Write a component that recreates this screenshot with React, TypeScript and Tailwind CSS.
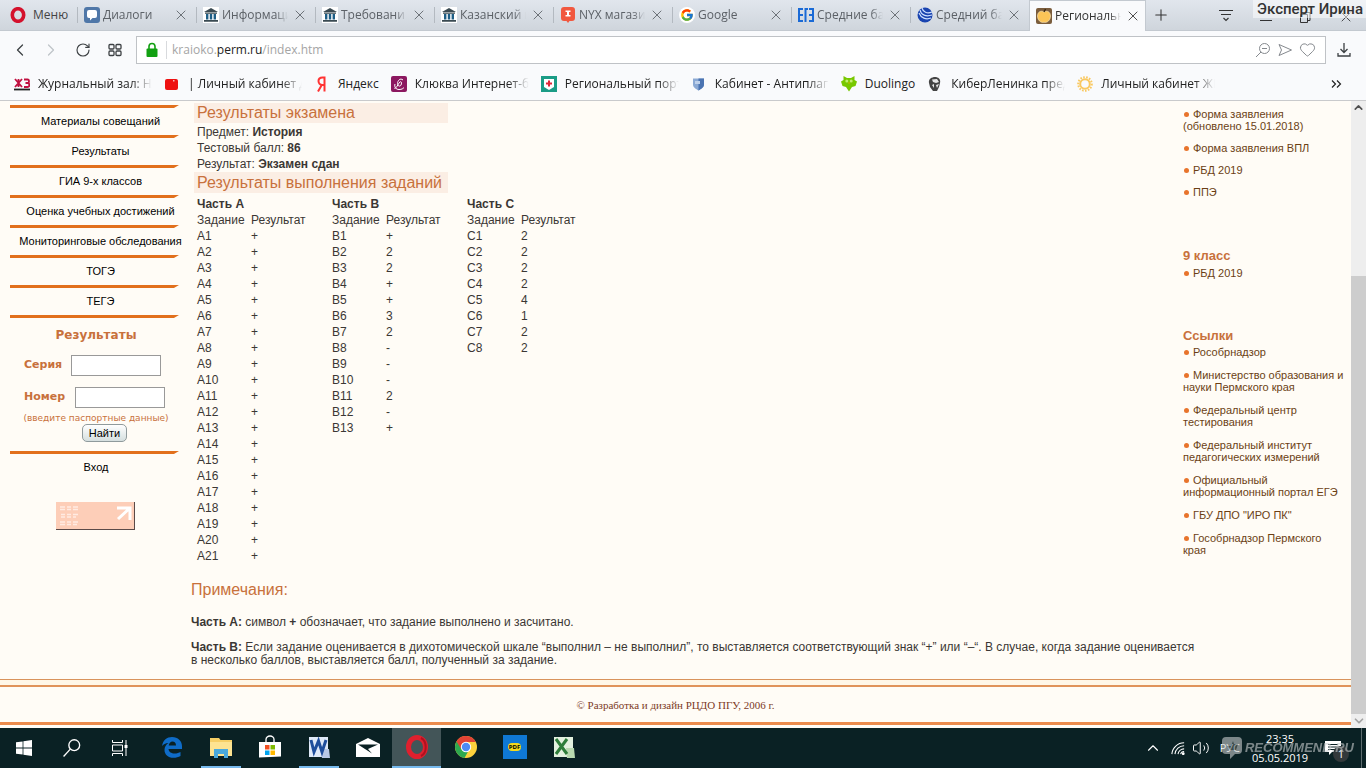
import type { ReactNode } from 'react';
import { ChevronLeft, ChevronRight, ChevronUp, ChevronDown, Heart, Plus, RotateCw, Volume2, X } from 'lucide-react';
import { FcGoogle } from 'react-icons/fc';

const FADE = '[mask-image:linear-gradient(to_right,#000_82%,transparent)]';

function MuseumIcon() {
  return (
    <svg viewBox="0 0 16 16" className="size-4 shrink-0">
      <rect width="16" height="16" fill="#fff" />
      <path d="M8 1 15 5H1z" fill="#3a4a52" />
      <path d="M2 5.500h12v1.200H2zM1 13h14v1.800H1z" fill="#3a4a52" />
      <path d="M3 7h2.400v5.500H3zM6.800 7h2.400v5.500H6.800zM10.600 7H13v5.500h-2.400z" fill="#1e5e86" />
    </svg>
  );
}

function DialogIcon() {
  return (
    <svg viewBox="0 0 16 16" className="size-4 shrink-0">
      <rect width="16" height="16" rx="3" fill="#4f77a8" />
      <path d="M5 3h6a2 2 0 0 1 2 2v4a2 2 0 0 1-2 2H8.500L6 13.500V11H5a2 2 0 0 1-2-2V5a2 2 0 0 1 2-2z" fill="#fff" />
    </svg>
  );
}

function NyxIcon() {
  return (
    <svg viewBox="0 0 16 16" className="size-4 shrink-0">
      <path d="M4 0h8a3 3 0 0 1 3 3v8a3 3 0 0 1-3 3h-2.500L8 16l-1.500-2H4a3 3 0 0 1-3-3V3a3 3 0 0 1 3-3z" fill="#f1583f" />
      <path d="M5.500 3.500h5v1.500H9v3h1.500v1.500h-5V8H7V5H5.500z" fill="#fff" />
    </svg>
  );
}

function GoogleIcon() {
  return (
    <span className="flex size-4 shrink-0 items-center justify-center rounded-full bg-white">
      <FcGoogle size={14} />
    </span>
  );
}

function EgeIcon() {
  return (
    <svg viewBox="0 0 16 16" className="size-4 shrink-0" fill="none" stroke="#1a6ad6" strokeWidth="2">
      <path d="M5 2H1v12h4M1 8h4M7.500 15V2H10M11 2h4v12h-4M11 8h4" />
    </svg>
  );
}

function GlobeIcon() {
  return (
    <svg viewBox="0 0 16 16" className="size-4 shrink-0">
      <circle cx="8" cy="8" r="7.500" fill="#1a44b0" />
      <path d="M5 1c1 4 5 6 10 4M3 3c1 5 6 7 12 5M2 6c2 5 7 7 12 5" fill="none" stroke="#cfe0ff" strokeWidth="1.200" />
    </svg>
  );
}

function AppleIcon() {
  return (
    <svg viewBox="0 0 16 16" className="size-4 shrink-0">
      <rect width="16" height="16" rx="2" fill="#7a5c3c" />
      <path d="M8 4C5 2 1.500 4 1.500 8S4.500 15 8 14.300c3.500.7 6.500-2.300 6.500-6.300S11 2 8 4z" fill="#fbc457" stroke="#fff0c8" strokeWidth=".6" />
      <path d="M8 4 9.500 1" stroke="#33240f" strokeWidth="1.200" />
    </svg>
  );
}

type Tab = { title: string; icon: ReactNode; active?: boolean };

const tabs: Tab[] = [
  { title: 'Диалоги', icon: <DialogIcon /> },
  { title: 'Информаци', icon: <MuseumIcon /> },
  { title: 'Требовани', icon: <MuseumIcon /> },
  { title: 'Казанский в', icon: <MuseumIcon /> },
  { title: 'NYX магази', icon: <NyxIcon /> },
  { title: 'Google', icon: <GoogleIcon /> },
  { title: 'Средние ба', icon: <EgeIcon /> },
  { title: 'Средний ба', icon: <GlobeIcon /> },
  { title: 'Региональн', icon: <AppleIcon />, active: true },
];

const bookmarks: { title: string; long?: boolean; icon: ReactNode }[] = [
  {
    title: 'Журнальный зал: НЛ',
    long: true,
    icon: (
      <svg viewBox="0 0 16 16" className="size-4 shrink-0" stroke="#c01040" strokeWidth="1.800" fill="none">
        <path d="M1 3l7 8M8 3l-7 8M4.500 3v8M10 3.500h3.500c2 0 2 3.500 0 3.500H11.500h2c2.500 0 2.500 4 0 4H10" />
        <path d="M0 13.500h16" stroke="#222" />
      </svg>
    ),
  },
  {
    title: '| Личный кабинет До',
    long: true,
    icon: (
      <svg viewBox="0 0 16 16" className="size-4 shrink-0">
        <rect x="1" y="3" width="13" height="11" rx="2" fill="#ee1111" />
        <path d="M9 4h1.500v1.500H9z" fill="#fff" opacity=".7" />
      </svg>
    ),
  },
  {
    title: 'Яндекс',
    icon: (
      <svg viewBox="0 0 16 16" className="size-4 shrink-0" fill="none" stroke="#f33" strokeWidth="2">
        <path d="M10.500 15.500V1.500H8.500C5.500 1.500 4.500 3 4.500 5s1.500 4 4 4h2M7.500 9.500 4 15.500" />
      </svg>
    ),
  },
  {
    title: 'Клюква Интернет-ба',
    long: true,
    icon: (
      <svg viewBox="0 0 16 16" className="size-4 shrink-0" fill="none" stroke="#fff">
        <rect width="16" height="16" rx="2" fill="#8c1860" stroke="none" />
        <path d="M12 4C9 1.500 6.500 5 6.500 7.500S9 11 10 9s.5-4-1-3-2 4-5.500 7M4 8c-1 3 1 5.500 4 5.500s4-1 5-2" />
      </svg>
    ),
  },
  {
    title: 'Региональный порта',
    long: true,
    icon: (
      <svg viewBox="0 0 16 16" className="size-4 shrink-0">
        <rect width="16" height="16" fill="#1b9c86" />
        <path d="M3 3h10v8l-5 3-5-3z" fill="#fff" />
        <path d="M7 4.500h2v2h2v2H9v2H7v-2H5v-2h2z" fill="#e02638" />
      </svg>
    ),
  },
  {
    title: 'Кабинет - Антиплаги',
    long: true,
    icon: (
      <svg viewBox="0 0 16 16" className="size-4 shrink-0">
        <path d="M2 2.500h11v6c0 3-3 4.500-5.500 6C5 13 2 11.500 2 8.500z" fill="#8ba9d4" />
        <path d="M7.500 2.500H13v6c0 3-3 4.500-5.500 6z" fill="#4b74b2" />
        <path d="M4 5h5v3H4z" fill="#bed0ea" />
      </svg>
    ),
  },
  {
    title: 'Duolingo',
    icon: (
      <svg viewBox="0 0 16 16" className="size-4 shrink-0">
        <path d="M2.500 0 6 2h4l3.500-2v4L16 5.500 14.500 10 11 11l-3 4.500L5 11l-3.500-1L0 5.500 2.500 4z" fill="#78c800" />
        <circle cx="5.800" cy="5" r="1.500" fill="#c2ee70" />
        <circle cx="10.200" cy="5" r="1.500" fill="#c2ee70" />
        <path d="M7 6.500h2L8 8z" fill="#f7a500" />
      </svg>
    ),
  },
  {
    title: 'КиберЛенинка пред',
    long: true,
    icon: (
      <svg viewBox="0 0 16 16" className="size-4 shrink-0">
        <path d="M2 7C1 3 5 1 8 1s6 2 5 6l-1 4-2 4H6L3 11z" fill="#444" />
        <path d="M5 3.500 10 3l2 3-3 1-3-1zM5 9l2-1v4zM9 9l3-1-2 4z" fill="#e8e8e8" />
      </svg>
    ),
  },
  {
    title: 'Личный кабинет ЖК',
    long: true,
    icon: (
      <svg viewBox="0 0 16 16" className="size-4 shrink-0" fill="none" stroke="#f9c860">
        <circle cx="8" cy="8" r="4.800" strokeWidth="2" />
        <circle cx="8" cy="8" r="6.800" strokeWidth="2" strokeDasharray="1.600 1.400" />
      </svg>
    ),
  },
];

const menu = [
  'Материалы совещаний',
  'Результаты',
  'ГИА 9-х классов',
  'Оценка учебных достижений',
  'Мониторинговые обследования',
  'ТОГЭ',
  'ТЕГЭ',
];

const parts = [
  { name: 'A', results: Array<string>(21).fill('+') },
  { name: 'B', results: ['+', '2', '2', '+', '+', '3', '2', '-', '-', '-', '2', '-', '+'] },
  { name: 'C', results: ['2', '2', '2', '2', '4', '1', '2', '2'] },
];

const forms = ['Форма заявления\n(обновлено 15.01.2018)', 'Форма заявления ВПЛ', 'РБД 2019', 'ППЭ'];

const links = [
  'Рособрнадзор',
  'Министерство образования и науки Пермского края',
  'Федеральный центр тестирования',
  'Федеральный институт педагогических измерений',
  'Официальный информационный портал ЕГЭ',
  'ГБУ ДПО "ИРО ПК"',
  'Гособрнадзор Пермского\nкрая',
];

function TabBar() {
  return (
    <div className="flex h-[31px] border-b border-[#c3c9d0] bg-linear-to-b from-[#e1e6ed] to-[#cfd5dc] text-[12px] text-[#5c6167]">
      <button type="button" className="flex w-[77px] shrink-0 items-center gap-[7px] pl-[10px] text-[#444]">
        <svg viewBox="0 0 16 16" className="size-4">
          <ellipse cx="8" cy="8" rx="5.700" ry="6.300" fill="none" stroke="#d4112c" strokeWidth="3.600" />
        </svg>
        Меню
      </button>
      <div className="flex min-w-0">
        {tabs.map((tab, i) => (
          <div
            key={i}
            className={
              tab.active
                ? '-mb-px flex w-[117px] items-center border-x border-t border-[#c3c9d0] bg-[#f9fafc] pl-[6px] text-[#333]'
                : 'flex w-[119px] items-center'
            }
          >
            {!tab.active && <span className="mr-[6px] h-4 w-px bg-[#b3b9c0]" />}
            {tab.icon}
            <span className={`ml-[3px] w-[66px] overflow-hidden whitespace-nowrap ${FADE}`}>{tab.title}</span>
            <button type="button" aria-label="Закрыть вкладку" className="ml-1">
              <X size={16} strokeWidth={1.3} />
            </button>
          </div>
        ))}
      </div>
      <button type="button" aria-label="Новая вкладка" className="ml-[6px] text-[#333]">
        <Plus size={18} strokeWidth={1.4} />
      </button>
      <button type="button" aria-label="Меню вкладок" className="ml-auto mr-[24px] text-[#333]">
        <svg viewBox="0 0 16 16" className="size-4" fill="none" stroke="currentColor" strokeWidth="1.200">
          <path d="M1 3.500h14M3 7.500h10M5.500 11 8 13.500 10.500 11" />
        </svg>
      </button>
      <div className="flex w-[108px] items-center justify-between pt-1 pr-[12px] pl-[2px] text-[#333]">
        <svg viewBox="0 0 12 12" className="size-3" fill="none" stroke="currentColor">
          <path d="M0 9.500h12" />
        </svg>
        <svg viewBox="0 0 12 12" className="size-3" fill="none" stroke="currentColor">
          <path d="M1.500 3.500h7v8h-7zM4 3.500v-2h7v8H8.500" />
        </svg>
        <X size={16} strokeWidth={1.3} />
      </div>
    </div>
  );
}

function AddressBar() {
  return (
    <div className="flex h-[36px] items-center pt-px pl-[10px] text-[#3c4043]">
      <button type="button" aria-label="Назад">
        <ChevronLeft size={20} strokeWidth={1.5} />
      </button>
      <button type="button" aria-label="Вперёд" className="ml-[11px] text-[#bfc3c8]">
        <ChevronRight size={20} strokeWidth={1.5} />
      </button>
      <button type="button" aria-label="Обновить" className="ml-[14px]">
        <RotateCw size={16} strokeWidth={1.7} />
      </button>
      <button type="button" aria-label="Экспресс-панель" className="ml-[16px]">
        <svg viewBox="0 0 16 16" className="size-4" fill="none" stroke="currentColor" strokeWidth="1.300">
          <rect x="2" y="2.500" width="5" height="4.500" rx="1" />
          <rect x="9" y="2.500" width="5" height="4.500" rx="1" />
          <rect x="2" y="9" width="5" height="4.500" rx="1" />
          <rect x="9" y="9" width="5" height="4.500" rx="1" />
        </svg>
      </button>
      <div className="ml-[13px] flex h-[28px] flex-1 items-center border border-[#bfc2c6] bg-white">
        <svg viewBox="0 0 12 16" className="ml-[9px] h-4 w-3">
          <path d="M3 7V4.500a3 3 0 0 1 6 0V7" fill="none" stroke="#12a012" strokeWidth="1.600" />
          <rect x="0.500" y="6.500" width="11" height="8.500" rx="1" fill="#12a012" />
        </svg>
        <span className="mr-[5px] ml-[8px] h-[18px] w-px bg-[#d8dadd]" />
        <div className="text-[12px] text-[#a5a5a5]">
          kraioko.<span className="text-[#222]">perm.ru</span>/index.htm
        </div>
        <div className="ml-auto mr-[9px] flex items-center gap-[6px] text-[#85898e]">
          <svg viewBox="0 0 16 16" className="size-4" fill="none" stroke="currentColor">
            <circle cx="9.500" cy="6.500" r="5" />
            <path d="M7 6.500h5M6 10l-5 5" />
          </svg>
          <svg viewBox="0 0 16 16" className="size-4" fill="none" stroke="currentColor">
            <path d="M2 2.500 14.500 8 2 13.500 4.500 8z" />
          </svg>
          <Heart size={17} strokeWidth={1.4} />
        </div>
      </div>
      <button type="button" aria-label="Загрузки" className="mr-[14px] ml-[10px]">
        <svg viewBox="0 0 16 16" className="size-4" fill="none" stroke="currentColor" strokeWidth="1.300">
          <path d="M8 1v9M4.500 7 8 10.500 11.500 7M2 11v3h12v-3" />
        </svg>
      </button>
    </div>
  );
}

function Bookmarks() {
  return (
    <div className="flex h-[34px] items-center gap-3 border-b border-[#c9cacc] pl-[14px] pr-[24px] text-[12px] text-[#222]">
      {bookmarks.map(b => (
        <a key={b.title} href="#" className="flex items-center gap-2 whitespace-nowrap">
          {b.icon}
          <span className={b.long ? `w-[114px] overflow-hidden ${FADE}` : ''}>{b.title}</span>
        </a>
      ))}
      <button type="button" aria-label="Ещё закладки" className="ml-auto">
        <svg viewBox="0 0 12 12" className="size-3" fill="none" stroke="currentColor" strokeWidth="1.200">
          <path d="M2 2.500 5.500 6 2 9.500M7 2.500 10.500 6 7 9.500" />
        </svg>
      </button>
    </div>
  );
}

function Rule() {
  return <div className="h-[3px] w-[169px] bg-[#e2701c] [clip-path:polygon(0_0,100%_0,97%_100%,0_100%)]" />;
}

function Sidebar() {
  return (
    <aside className="w-[181px] shrink-0 text-[11px] text-black">
      <nav>
        {menu.map(item => (
          <div key={item}>
            <Rule />
            <a href="#" className="block h-[27px] text-center leading-[26px] whitespace-nowrap">
              {item}
            </a>
          </div>
        ))}
      </nav>
      <Rule />
      <form className="pt-[7px] font-['DejaVu_Sans',sans-serif] text-[11px] font-bold text-[#c8713c]" onSubmit={e => e.preventDefault()}>
        <h2 className="mr-[9px] text-center text-[12px] leading-5">Результаты</h2>
        <div className="mt-[10px] flex items-center pl-[14px]">
          <label htmlFor="series" className="w-[47px]">Серия</label>
          <input id="series" className="h-[21px] w-[90px] border border-[#999] bg-white px-1" />
        </div>
        <div className="mt-[11px] flex items-center pl-[14px]">
          <label htmlFor="number" className="w-[51px]">Номер</label>
          <input id="number" className="h-[21px] w-[90px] border border-[#999] bg-white px-1" />
        </div>
        <p className="mr-[9px] mt-[5px] text-center text-[9px] leading-[11px] font-normal whitespace-nowrap">(введите паспортные данные)</p>
        <button
          type="submit"
          className="ml-[72px] block h-[18px] w-[45px] rounded-[5px] border border-[#8f9a9c] bg-linear-to-b from-white to-[#d5dfdf] font-['Liberation_Sans',sans-serif] leading-4 font-normal text-black"
        >
          Найти
        </button>
      </form>
      <div className="mt-[9px]">
        <Rule />
        <a href="#" className="mr-[9px] block text-center leading-[26px]">Вход</a>
      </div>
      <svg viewBox="0 0 79 28" className="mt-[22px] ml-[46px] h-[28px] w-[79px]">
        <rect width="79" height="28" fill="#5a4a48" />
        <rect width="78" height="27" fill="#fdceb8" />
        <path d="M61 6h13v12M74 6 62 17" fill="none" stroke="#fff" strokeWidth="3" />
        <path
          d="M4 5h5M4 7.500h5M11 5h4M11 7.500h4M17 5h5M17 7.500h5M5 12.500h4M5 15h4M11 12.500h4M11 15h4M17 12.500h5M17 15h3M4 20h5M4 22.500h5M11 20h4M11 22.500h4M17 20h5M17 22.500h4"
          stroke="#ffebe2"
          strokeWidth="1.500"
        />
      </svg>
    </aside>
  );
}

function Results() {
  return (
    <main className="min-w-0 flex-1 text-[12px] text-[#3b3734]">
      <div className="-mt-[2px] ml-[3px]">
        <h2 className="w-[254px] bg-[#fbeee4] pl-[3px] text-[16px] leading-5 text-[#c8713c]">Результаты экзамена</h2>
        <div className="mt-px pl-[3px] leading-4">
          <p>Предмет: <b>История</b></p>
          <p>Тестовый балл: <b>86</b></p>
          <p>Результат: <b>Экзамен сдан</b></p>
        </div>
        <h2 className="w-[254px] bg-[#fbeee4] pl-[3px] text-[16px] leading-[21px] text-[#c8713c]">Результаты выполнения заданий</h2>
        <div className="mt-[3px] flex items-start pl-[3px] leading-4">
          {parts.map(part => (
            <table key={part.name} className="w-[135px] table-fixed border-collapse text-left">
              <caption className="text-left font-bold">Часть {part.name}</caption>
              <thead>
                <tr>
                  <th className="w-[54px] p-0 font-normal">Задание</th>
                  <th className="p-0 font-normal">Результат</th>
                </tr>
              </thead>
              <tbody>
                {part.results.map((r, i) => (
                  <tr key={i}>
                    <td className="p-0">{part.name}{i + 1}</td>
                    <td className="p-0">{r}</td>
                  </tr>
                ))}
              </tbody>
            </table>
          ))}
        </div>
      </div>
      <h2 className="mt-[16px] text-[16px] leading-5 text-[#c8713c]">Примечания:</h2>
      <p className="mt-[16px] leading-[13px]">
        <b>Часть A:</b> символ <b>+</b> обозначает, что задание выполнено и засчитано.
      </p>
      <p className="mt-[12px] -mr-4 leading-[13px]">
        <b>Часть B:</b> Если задание оценивается в дихотомической шкале “выполнил – не выполнил”, то выставляется
        соответствующий знак “+” или “–“. В случае, когда задание оценивается в&nbsp;несколько баллов, выставляется балл,
        полученный за задание.
      </p>
    </main>
  );
}

function LinkList({ items, gap = 'gap-[11px]' }: { items: string[]; gap?: string }) {
  return (
    <ul className={`flex flex-col leading-3 whitespace-pre-line ${gap}`}>
      {items.map(item => (
        <li key={item}>
          <span className="mr-1 ml-px inline-block size-[5px] rounded-full bg-[#e8742c] align-[1px]" />
          <a href="#">{item}</a>
        </li>
      ))}
    </ul>
  );
}

function RightColumn() {
  return (
    <aside className="w-[168px] shrink-0 pt-[3px] pr-[6px] text-[11px] text-[#6b3f14]">
      <LinkList items={forms} gap="gap-[10px]" />
      <h3 className="mt-[50px] mb-[3px] text-[13px] leading-4 font-bold text-[#c8713c]">9 класс</h3>
      <LinkList items={['РБД 2019']} />
      <h3 className="mt-[49px] mb-[2px] text-[13px] leading-4 font-bold text-[#c8713c]">Ссылки</h3>
      <LinkList items={links} />
    </aside>
  );
}

function Scrollbar() {
  return (
    <div className="flex w-[15px] shrink-0 flex-col items-center bg-[#eeeeee]">
      <ChevronUp size={13} strokeWidth={3} className="text-[#505050]" />
      <div className="flex-[37]" />
      <div className="w-full flex-[100] bg-[#cdcdcd]" />
      <ChevronDown size={14} strokeWidth={3} className="text-[#a3a3a3]" />
    </div>
  );
}

const apps: { name: string; state?: 'open' | 'active'; icon: ReactNode }[] = [
  {
    name: 'Edge',
    icon: (
      <svg viewBox="0 0 24 24" className="size-6">
        <path d="M2 11C3 5 7 2 12 2c6 0 10 4 10 9v3H8.500c.3 3 3 4.500 6 4.500 2.500 0 4.500-.6 6-1.500v4c-2 1.200-4.500 1.800-7 1.800C8 22.800 4.500 19.500 4.500 15c0-3 1.500-5.500 4-7C5.500 8 3 9.500 2 11zM8.700 10.500H16C16 8 14.500 6.500 12.500 6.500s-3.500 1.700-3.800 4z" fill="#0f6cc8" />
      </svg>
    ),
  },
  {
    name: 'Проводник',
    state: 'open',
    icon: (
      <svg viewBox="0 0 24 24" className="size-6">
        <path d="M1 3h9l1.500 2H23v16H1z" fill="#f6cf66" />
        <path d="M1 7h22v14H1z" fill="#fde391" />
        <path d="M5 23v-9h14v9h-4v-4H9v4z" fill="#4aa9dc" />
      </svg>
    ),
  },
  {
    name: 'Магазин',
    icon: (
      <svg viewBox="0 0 24 24" className="size-6">
        <path d="M8 7V4.500a4 3.500 0 0 1 8 0V7" fill="none" stroke="#fff" strokeWidth="1.300" />
        <path d="M1 7h22v14.500l-22 1z" fill="#fff" />
        <path d="M7 10h4.500v4.500H7z" fill="#f25022" />
        <path d="M12.500 10H17v4.500h-4.500z" fill="#7fba00" />
        <path d="M7 15.500h4.500V20H7z" fill="#00a4ef" />
        <path d="M12.500 15.500H17V20h-4.500z" fill="#ffb900" />
      </svg>
    ),
  },
  {
    name: 'Word',
    state: 'open',
    icon: (
      <svg viewBox="0 0 24 24" className="size-6">
        <path d="M2 2h19v20H2z" fill="#dfe9f8" />
        <path d="M13 14h9l1 9h-8z" fill="#b9c9e6" />
        <path d="M4 5l3 12L11.500 6 15 17 19 5" fill="none" stroke="#1f4e9c" strokeWidth="3" />
      </svg>
    ),
  },
  {
    name: 'Почта',
    icon: (
      <svg viewBox="0 0 24 24" className="size-6">
        <path d="M0 9 12 3l12 6v13H0z" fill="#fff" />
        <path d="M2 9.500h20L12 14l4 4.500z" fill="#0a2124" />
      </svg>
    ),
  },
  {
    name: 'Opera',
    state: 'active',
    icon: (
      <svg viewBox="0 0 24 24" className="size-6">
        <ellipse cx="12" cy="12" rx="8.500" ry="9.500" fill="none" stroke="#e0202e" strokeWidth="5" />
        <path d="M16 3c6 3 6.500 15 0 18" fill="none" stroke="#b01020" strokeWidth="2" />
      </svg>
    ),
  },
  {
    name: 'Chrome',
    icon: (
      <svg viewBox="0 0 24 24" className="size-6">
        <circle cx="12" cy="12" r="11" fill="#fdd23c" />
        <path d="M12 12 2.500 6.500A11 11 0 0 0 10.500 22.900l5-9z" fill="#2da94f" />
        <path d="M2.500 6.500A11 11 0 0 1 21.800 7H12l-4.500 7.500z" fill="#e04335" />
        <circle cx="12" cy="12" r="5.200" fill="#fff" />
        <circle cx="12" cy="12" r="4.200" fill="#4c8bf5" />
      </svg>
    ),
  },
  {
    name: 'PDF',
    icon: (
      <span className="flex size-6 items-center justify-center bg-[#0f78d4]">
        <span className="rounded-sm bg-[#f5d91c] px-px text-[6px] leading-2 font-bold text-black">PDF</span>
      </span>
    ),
  },
  {
    name: 'Excel',
    icon: (
      <svg viewBox="0 0 24 24" className="size-6">
        <path d="M2 2h19v20H2z" fill="#e3f1df" />
        <path d="M14 13h8l1 10h-8z" fill="#b9d9b0" />
        <path d="M4 4l11 15M15 4 4 19" stroke="#2e7d3a" strokeWidth="3" />
      </svg>
    ),
  },
];

function Taskbar() {
  return (
    <footer className="relative flex h-[40px] shrink-0 items-stretch bg-[#0a2124] text-[11px] text-white">
      <div className="mr-[3px] flex">
        <button type="button" aria-label="Пуск" className="flex w-12 items-center justify-center">
          <svg viewBox="0 0 16 16" className="size-4" fill="#fff">
            <path d="M0 2.300 6.600 1.400v6.200H0zM7.400 1.300 16 0v7.600H7.400zM0 8.400h6.600v6.200L0 13.700zM7.400 8.400H16V16l-8.600-1.300z" />
          </svg>
        </button>
        <button type="button" aria-label="Поиск" className="flex w-12 items-center justify-center">
          <svg viewBox="0 0 16 16" className="size-[18px]" fill="none" stroke="#fff" strokeWidth="1.200">
            <circle cx="10" cy="5.500" r="4.800" />
            <path d="M6.500 9 .5 15.500" />
          </svg>
        </button>
        <button type="button" aria-label="Представление задач" className="flex w-12 items-center justify-center">
          <svg viewBox="0 0 16 16" className="size-4" fill="none" stroke="#fff">
            <path d="M.5 0v2.500h10V0M.5 16v-2.500h10V16M.5 5h10v6H.5zM14 0v16" />
            <path d="M14 5v3" strokeWidth="3" />
          </svg>
        </button>
      </div>
      {apps.map(app => (
        <button
          key={app.name}
          type="button"
          aria-label={app.name}
          className={`flex w-[49px] flex-col items-center ${app.state === 'active' ? 'bg-[#435558]' : ''}`}
        >
          <span className="flex h-[38px] items-center">{app.icon}</span>
          {app.state && <span className={`h-[2px] bg-[#76b9ed] ${app.state === 'active' ? 'w-full' : 'w-10'}`} />}
        </button>
      ))}
      <div className="ml-auto flex items-center">
        <ChevronUp size={18} strokeWidth={1.5} />
        <svg viewBox="0 0 16 16" className="ml-[9px] size-[14px]" fill="none" stroke="#fff" strokeWidth="1.200">
          <path d="M1 15A14 14 0 0 1 15 2M4.500 15A10.500 10.500 0 0 1 15 5.500M8 15a7 7 0 0 1 7-6M11 15a4 4 0 0 1 4-3" />
          <circle cx="14" cy="14.500" r="1" fill="#fff" />
        </svg>
        <Volume2 size={18} strokeWidth={1.3} className="ml-[7px]" />
        <span className="ml-[10px]">РУС</span>
        <div className="ml-[10px] w-[60px] text-center leading-[19px]">
          23:35
          <br />
          05.05.2019
        </div>
        <div className="relative mr-[20px] ml-[15px]">
          <svg viewBox="0 0 16 16" className="size-4" fill="#fff">
            <path d="M0 1h16v11H7l-3 3v-3H0z" />
            <path d="M3 4.500h10M3 7h10M3 9.500h7" stroke="#0a2124" />
          </svg>
          <span className="absolute top-[6px] left-[8px] flex size-4 items-center justify-center rounded-full bg-[#33393b]">1</span>
        </div>
        <span className="mr-[4px] h-[40px] w-px bg-[#5d6c6e]" />
      </div>
      <div className="absolute top-[9px] right-[12px] flex items-center gap-[3px] text-[#c8cccd] opacity-60">
        <svg viewBox="0 0 20 22" className="h-[22px] w-5" fill="currentColor">
          <path d="M4 0h12a4 4 0 0 1 4 4v9a4 4 0 0 1-4 4h-3l-5 5v-5H4a4 4 0 0 1-4-4V4a4 4 0 0 1 4-4z" />
          <path d="M5 9h4l2-5 1 3h4l-2 6H8z" fill="#5b6769" />
        </svg>
        <span className="font-['Liberation_Sans',sans-serif] text-[13px] font-bold italic">RECOMMEND.RU</span>
      </div>
    </footer>
  );
}

export default function App() {
  return (
    <div className="relative flex min-h-screen flex-col bg-[#f9fafc] font-['Open_Sans',sans-serif]">
      <TabBar />
      <AddressBar />
      <Bookmarks />
      <div className="flex flex-1 bg-[#fffcf6] font-['Liberation_Sans',sans-serif]">
        <div className="flex min-w-0 flex-1 flex-col">
          <div className="flex pt-[4px] pl-[10px]">
            <Sidebar />
            <Results />
            <RightColumn />
          </div>
          <div className="mt-[12px] h-[8px] border-t border-b-2 border-t-[#d9935c] border-b-[#e0935a] bg-[#fff7e8]" />
          <div className="pt-[11px] pb-[10px] text-center font-['Liberation_Serif',serif] text-[11px] leading-[14px] text-[#7c3a1e]">
            © Разработка и дизайн РЦДО ПГУ, 2006 г.
          </div>
          <div className="mb-[3px] h-[3px] bg-[#ec8b4c]" />
        </div>
        <Scrollbar />
      </div>
      <Taskbar />
      <div className="absolute top-0 right-0 bg-white/50 pr-[3px] pl-1 font-[Roboto,sans-serif] text-[15px] leading-[18px] font-medium text-[#333]">
        Эксперт Ирина
      </div>
    </div>
  );
}
